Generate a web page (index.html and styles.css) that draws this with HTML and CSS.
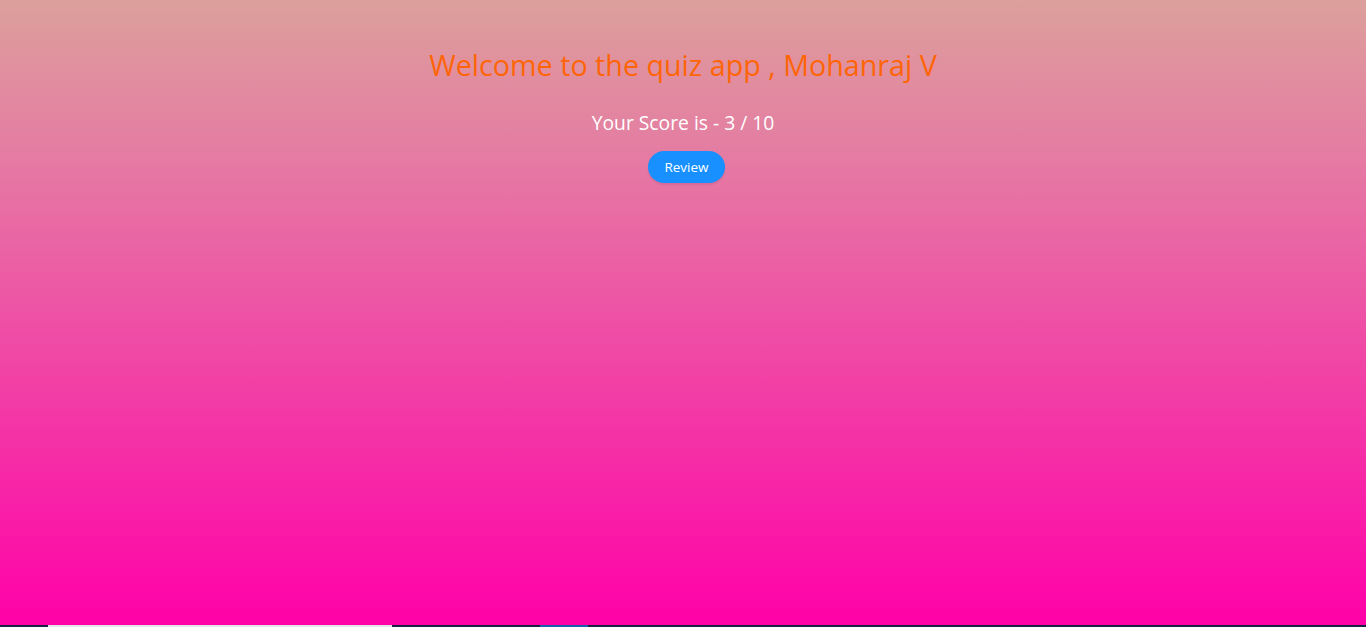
FILE: index.html
```html
<!DOCTYPE html>
<html lang="en">
<head>
<meta charset="utf-8">
<title>Quiz App</title>
<link rel="stylesheet" href="styles.css">
</head>
<body>
<div class="page">
  <main class="content">
    <h1 class="title">Welcome to the quiz app , Mohanraj V</h1>
    <p class="score">Your Score is - 3 / 10</p>
    <button class="review">Review</button>
  </main>
  <div class="strip">
    <span class="seg dark s1"></span>
    <span class="seg light s2"></span>
    <span class="seg dark s3"></span>
    <span class="seg blue s4"></span>
    <span class="seg dark s5"></span>
  </div>
</div>
</body>
</html>
```
FILE: styles.css
```css
html, body {
  margin: 0;
  padding: 0;
  height: 100%;
}
body {
  font-family: "Open Sans", "Noto Sans", sans-serif;
}
.page {
  height: 627px;
  display: flex;
  flex-direction: column;
  background: linear-gradient(to bottom, #dca09b 0%, #e57ba3 25%, #ff00a8 100%);
}
.content {
  flex: 1;
  display: flex;
  flex-direction: column;
  align-items: center;
  padding-top: 45px;
}
.title {
  margin: 0;
  font-size: 28.7px;
  font-weight: 400;
  color: #ff6407;
  line-height: 39px;
}
.score {
  margin: 26px 0 0;
  font-size: 19.3px;
  color: #ffffff;
  line-height: 26px;
}
.review {
  margin-top: 15px;
  margin-left: 7px;
  width: 77px;
  height: 32px;
  border: none;
  border-radius: 16px;
  background: #1890ff;
  color: #fff;
  font-family: inherit;
  font-size: 13.5px;
  padding: 0;
  box-shadow: 0 2px 2px rgba(0,0,0,0.08);
}
.strip {
  height: 2px;
  display: flex;
}
.seg { height: 2px; }
.dark { background: #1a2440; }
.light { background: #e8e4ec; }
.blue { background: #1a5fa8; }
.s1 { width: 48px; }
.s2 { width: 344px; }
.s3 { width: 148px; }
.s4 { width: 48px; }
.s5 { flex: 1; }
```
